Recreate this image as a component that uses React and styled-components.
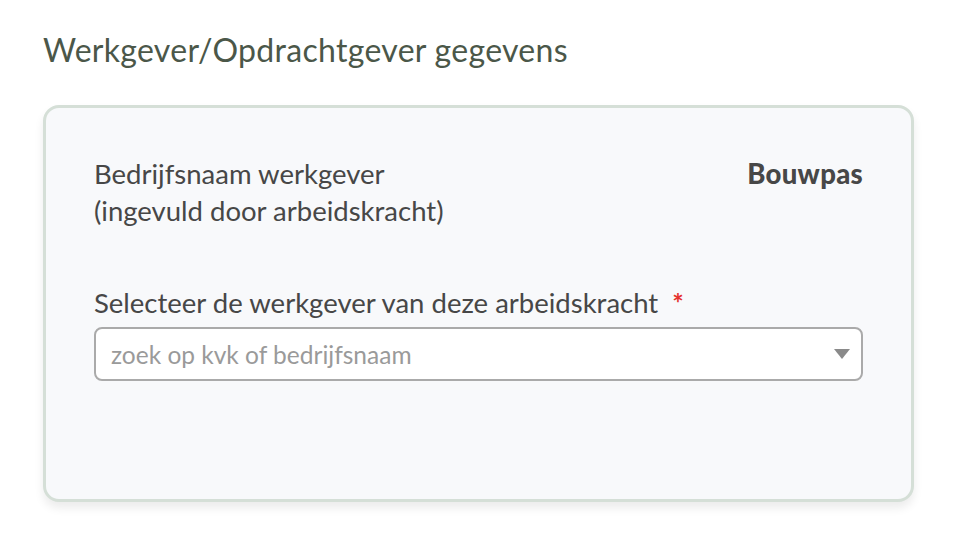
import React from 'react';
import styled, { createGlobalStyle } from 'styled-components';

const GlobalStyle = createGlobalStyle`
  html, body {
    margin: 0;
    padding: 0;
    background: #ffffff;
  }
  body {
    font-family: 'Lato', 'Liberation Sans', sans-serif;
  }
`;

const Page = styled.div`
  width: 960px;
  height: 552px;
  padding: 30px 46px 0 43px;
  box-sizing: border-box;
`;

const SectionTitle = styled.h2`
  margin: 0 0 35px;
  font-family: 'Lato', sans-serif;
  font-weight: 400;
  font-size: 32px;
  line-height: 40px;
  letter-spacing: 0.3px;
  color: #4b5749;
`;

const Card = styled.div`
  box-sizing: border-box;
  height: 397px;
  background: #f8f9fb;
  border: 3px solid #d5dfd7;
  border-radius: 16px;
  box-shadow: 0 6px 10px rgba(0, 0, 0, 0.08);
  padding: 47px 48px;
  color: #474747;
`;

const InfoRow = styled.div`
  display: flex;
  justify-content: space-between;
  align-items: flex-start;
`;

const InfoLabel = styled.div`
  font-size: 27.5px;
  line-height: 37px;
`;

const InfoValue = styled.div`
  font-size: 27.5px;
  line-height: 37px;
  font-weight: 900;
  letter-spacing: 0.3px;
`;

const Field = styled.div`
  margin-top: 56px;
  display: flex;
  flex-direction: column;
  gap: 6px;
`;

const FieldLabel = styled.label`
  font-size: 27.5px;
  line-height: 36px;
`;

const Required = styled.span`
  color: #e5322d;
  font-size: 27px;
  font-weight: 700;
  margin-left: 14px;
`;

const SelectBox = styled.div`
  box-sizing: border-box;
  height: 54px;
  background: #ffffff;
  border: 2px solid #aaaaaa;
  border-radius: 8px;
  display: flex;
  align-items: center;
  justify-content: space-between;
  padding: 0 11px 0 15px;
`;

const Placeholder = styled.span`
  font-size: 24.5px;
  color: #9a9a9a;
`;

const Caret = styled.svg`
  width: 16px;
  height: 10px;
  fill: #8a8a8a;
`;

const App = () => (
  <>
    <GlobalStyle />
    <Page>
      <SectionTitle>Werkgever/Opdrachtgever gegevens</SectionTitle>
      <Card>
        <InfoRow>
          <InfoLabel>
            Bedrijfsnaam werkgever
            <br />
            (ingevuld door arbeidskracht)
          </InfoLabel>
          <InfoValue>Bouwpas</InfoValue>
        </InfoRow>
        <Field>
          <FieldLabel>
            Selecteer de werkgever van deze arbeidskracht
            <Required>*</Required>
          </FieldLabel>
          <SelectBox>
            <Placeholder>zoek op kvk of bedrijfsnaam</Placeholder>
            <Caret viewBox="0 0 16 10">
              <polygon points="0,0 16,0 8,10" />
            </Caret>
          </SelectBox>
        </Field>
      </Card>
    </Page>
  </>
);

export default App;
